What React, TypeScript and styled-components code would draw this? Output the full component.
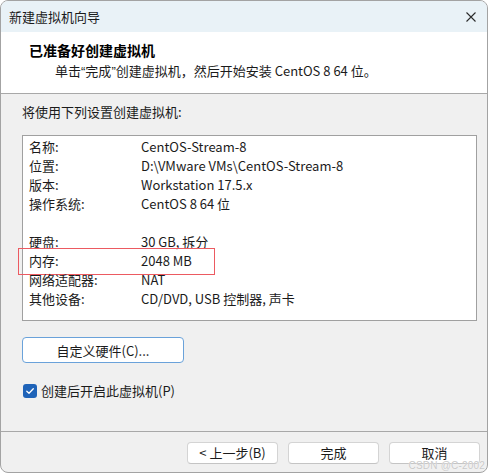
import React from "react";
import styled, { createGlobalStyle } from "styled-components";

const Global = createGlobalStyle`
  html, body { margin: 0; padding: 0; background: #ffffff; }
  body { font-family: "Noto Sans CJK SC", sans-serif; }
  * { box-sizing: border-box; }
`;

const FONT = `"Noto Sans CJK SC", "Noto Sans", sans-serif`;

const Window = styled.div`
  position: relative;
  width: 488px;
  height: 473px;
  border: 1px solid #a3a3a3;
  border-radius: 8px;
  overflow: hidden;
  display: flex;
  flex-direction: column;
  background: #f0f0f0;
  font-family: ${FONT};
  font-size: 13px;
  color: #1b1b1b;
`;

const TitleBar = styled.div`
  height: 31px;
  flex: none;
  background: #e9f2f7;
  display: flex;
  align-items: center;
  justify-content: space-between;
  padding: 0 10px 0 8px;
  font-size: 13px;
`;

const CloseIcon = styled.svg`
  width: 10px;
  height: 10px;
  margin-right: 1px;
`;

const Header = styled.div`
  flex: none;
  height: 62px;
  background: #ffffff;
  border-bottom: 1px solid #a8a8a8;
  padding: 9px 0 0 28px;
  display: flex;
  flex-direction: column;
  gap: 3px;
`;

const HeaderTitle = styled.div`
  font-size: 14px;
  font-weight: 700;
  line-height: 18px;
  color: #000;
`;

const HeaderSub = styled.div`
  font-size: 13px;
  line-height: 18px;
  padding-left: 26px;
  color: #1b1b1b;
`;

const Quote = styled.span`
  font-family: "Liberation Sans", sans-serif;
`;

const Body = styled.div`
  flex: 1;
  display: flex;
  flex-direction: column;
  align-items: flex-start;
  padding: 9px 10px 0 21px;
`;

const Intro = styled.div`
  line-height: 18px;
`;

const SummaryBox = styled.div`
  margin-top: 14px;
  width: 455px;
  height: 186px;
  background: #ffffff;
  border: 1px solid #a0a0a0;
  padding: 1px 0 0 6px;
  display: flex;
  flex-direction: column;
`;

const Row = styled.div<{ $highlight?: boolean }>`
  position: relative;
  display: grid;
  grid-template-columns: 112px 1fr;
  height: 19px;
  line-height: 19px;
  white-space: nowrap;
  &::after {
    content: "";
    display: ${(p) => (p.$highlight ? "block" : "none")};
    position: absolute;
    left: -11px;
    top: -3px;
    width: 195px;
    height: 25px;
    border: 1px solid #ec5a61;
    pointer-events: none;
  }
`;

const Spacer = styled.div<{ $h: number }>`
  height: ${(p) => p.$h}px;
  flex: none;
`;

const CustomButton = styled.button`
  margin-top: 16px;
  width: 162px;
  height: 26px;
  background: #ffffff;
  border: 1px solid #6aa2da;
  border-radius: 4px;
  font-family: ${FONT};
  font-size: 13px;
  color: #1b1b1b;
  padding: 0;
`;

const CheckRow = styled.label`
  margin-top: 20px;
  display: flex;
  align-items: center;
  gap: 4px;
  line-height: 16px;
  margin-left: 1px;
`;

const CheckBox = styled.span`
  width: 14px;
  height: 14px;
  border-radius: 3px;
  background: #1f63b8;
  display: flex;
  align-items: center;
  justify-content: center;
`;

const Footer = styled.div`
  flex: none;
  height: 41px;
  border-top: 1px solid #a8a8a8;
  display: flex;
  justify-content: flex-end;
  align-items: flex-start;
  gap: 10px;
  padding: 10px 7px 0 0;
`;

const WizButton = styled.button`
  width: 91px;
  height: 22px;
  background: #ffffff;
  border: 1px solid #d4d4d4;
  border-bottom-color: #c4c4c4;
  border-radius: 4px;
  font-family: ${FONT};
  font-size: 13px;
  line-height: 18px;
  color: #1b1b1b;
  padding: 0;
`;

const Watermark = styled.div`
  position: absolute;
  right: 2px;
  bottom: 1px;
  font-family: "Liberation Sans", sans-serif;
  font-size: 10px;
  color: #c9c9c9;
  letter-spacing: 0.2px;
  text-shadow: 0 0 1px #fff;
  pointer-events: none;
`;

const rows: Array<[string, string] | null> = [
  ["名称:", "CentOS-Stream-8"],
  ["位置:", "D:\\VMware VMs\\CentOS-Stream-8"],
  ["版本:", "Workstation 17.5.x"],
  ["操作系统:", "CentOS 8 64 位"],
  null,
  ["硬盘:", "30 GB, 拆分"],
  ["内存:", "2048 MB"],
  ["网络适配器:", "NAT"],
  ["其他设备:", "CD/DVD, USB 控制器, 声卡"],
];

export default function App() {
  return (
    <>
      <Global />
      <Window>
        <TitleBar>
          <span>新建虚拟机向导</span>
          <CloseIcon viewBox="0 0 10 10">
            <path d="M0.5 0.5 L9.5 9.5 M9.5 0.5 L0.5 9.5" stroke="#2b2b2b" strokeWidth="1.1" fill="none" />
          </CloseIcon>
        </TitleBar>
        <Header>
          <HeaderTitle>已准备好创建虚拟机</HeaderTitle>
          <HeaderSub>
            单击<Quote>“</Quote>完成<Quote>”</Quote>创建虚拟机，然后开始安装 CentOS 8 64 位。
          </HeaderSub>
        </Header>
        <Body>
          <Intro>将使用下列设置创建虚拟机:</Intro>
          <SummaryBox>
            {rows.map((r, i) =>
              r ? (
                <Row key={i} $highlight={r[0] === "内存:"}>
                  <span>{r[0]}</span>
                  <span>{r[1]}</span>
                </Row>
              ) : (
                <Spacer key={i} $h={19} />
              )
            )}
          </SummaryBox>
          <CustomButton>自定义硬件(C)...</CustomButton>
          <CheckRow>
            <CheckBox>
              <svg width="10" height="10" viewBox="0 0 10 10">
                <path d="M1.8 5.2 L4 7.3 L8.3 2.8" stroke="#fff" strokeWidth="1.3" fill="none" strokeLinecap="round" strokeLinejoin="round" />
              </svg>
            </CheckBox>
            <span>创建后开启此虚拟机(P)</span>
          </CheckRow>
        </Body>
        <Footer>
          <WizButton>&lt; 上一步(B)</WizButton>
          <WizButton>完成</WizButton>
          <WizButton>取消</WizButton>
        </Footer>
        <Watermark>CSDN @C-2002</Watermark>
      </Window>
    </>
  );
}
